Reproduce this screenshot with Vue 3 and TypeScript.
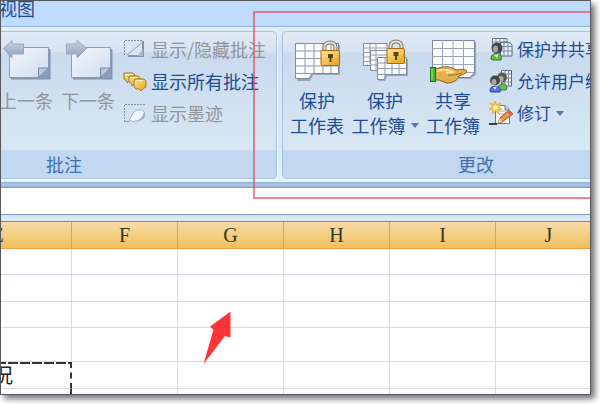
<script setup lang="ts">
interface Column {
  name: string
  kind: 'wide' | 'normal'
}

const columns: Column[] = [
  { name: 'E', kind: 'wide' },
  { name: 'F', kind: 'normal' },
  { name: 'G', kind: 'normal' },
  { name: 'H', kind: 'normal' },
  { name: 'I', kind: 'normal' },
  { name: 'J', kind: 'normal' },
]

const rows: { size: string; first: string; mark: string }[] = [
  { size: 'short', first: '', mark: '' },
  { size: 'mid', first: '', mark: '' },
  { size: 'short', first: '', mark: '' },
  { size: 'tall', first: '', mark: '' },
  { size: 'mid', first: '况', mark: 'copied-top copied-right' },
  { size: 'cut', first: '', mark: 'copied-right' },
]
</script>

<template>
  <div class="frame">
    <nav class="tabs"><a href="#" class="tab">视图</a></nav>

    <div class="ribbon">
      <section class="group comments">
        <div class="body">
          <button class="large" disabled>
            <svg viewBox="0 0 50 50" class="big">
              <defs>
                <linearGradient id="card" x1="0" y1="0" x2="1" y2="1">
                  <stop offset="0" stop-color="#f4f7fc" />
                  <stop offset="1" stop-color="#cfdbef" />
                </linearGradient>
                <linearGradient id="steel" x1="0" y1="0" x2="0" y2="1">
                  <stop offset="0" stop-color="#cbd6e6" />
                  <stop offset="1" stop-color="#8d9db8" />
                </linearGradient>
                <linearGradient id="gold" x1="0" y1="0" x2="1" y2="1">
                  <stop offset="0" stop-color="#ffe48a" />
                  <stop offset="1" stop-color="#e5a01c" />
                </linearGradient>
              </defs>
              <path d="M10 13H49.500V43.500H10Z" fill="#8392ae" />
              <path d="M8.500 11.500H47.500V41.500H8.500Z" fill="url(#card)" stroke="#8e9cb8" />
              <path d="M37.500 41.500V32H47.500Z" fill="#b9c8df" stroke="#7788a6" />
              <path d="M47 32L38 41.500H47.500Z" fill="#8c9bb7" />
              <path d="M2.500 12.500L11 4.500V8H22.500V18H11V22Z" fill="url(#steel)" stroke="#98a6be" />
            </svg>
            <span>上一条</span>
          </button>
          <button class="large" disabled>
            <svg viewBox="0 0 50 50" class="big">
              <path d="M10 13H49.500V43.500H10Z" fill="#8392ae" />
              <path d="M8.500 11.500H47.500V41.500H8.500Z" fill="url(#card)" stroke="#8e9cb8" />
              <path d="M37.500 41.500V32H47.500Z" fill="#b9c8df" stroke="#7788a6" />
              <path d="M47 32L38 41.500H47.500Z" fill="#8c9bb7" />
              <path d="M23.500 12.500L14 4.500V8H3.500V18H14V22Z" fill="url(#steel)" stroke="#98a6be" />
            </svg>
            <span>下一条</span>
          </button>
          <div class="stack">
            <button class="small" disabled>
              <svg viewBox="0 0 24 24" class="little">
                <path d="M2 5H21V20H5Z" fill="#dbe5f3" />
                <path d="M20 4V19H5" fill="none" stroke="#8493ae" stroke-width="2" />
                <path d="M4 18L20 5" stroke="#93a1b8" />
                <path d="M14 19L20 12V19Z" fill="#a9b8d0" />
                <path d="M1.500 18V3.500H20" fill="none" stroke="#8491a8" stroke-dasharray="2 1" />
              </svg>
              <span>显示/隐藏批注</span>
            </button>
            <button class="small">
              <svg viewBox="0 0 24 24" class="little">
                <g fill="url(#gold)" stroke="#9b7b21">
                  <path d="M1 4H10L12 6V12H6L4 14V12L1 10Z" />
                  <path d="M6 7H15L17 9V15H11L9 17V15L6 13Z" />
                  <path d="M12 10H21L23 12V18L21 19L18 22L16 20H13L11 17V12Z" />
                </g>
                <path d="M2 5.500H10M7 8.500H15M13 11.500H20" stroke="#fff7bd" />
              </svg>
              <span>显示所有批注</span>
            </button>
            <button class="small" disabled>
              <svg viewBox="0 0 24 24" class="little">
                <path d="M1.500 21V3.500H22" fill="none" stroke="#8491a8" stroke-dasharray="2 1" />
                <path d="M2 20.500H6" stroke="#8491a8" />
                <path d="M6 19C8 17 9 10 15 9C20 8 23 11 21 15C19 20 12 22 6 19Z" fill="#f1f5fb" stroke="#a9b6ca" />
                <path d="M11 20C18 19 20 15 21 11C24 15 20 21 11 20Z" fill="#a0adc3" />
              </svg>
              <span>显示墨迹</span>
            </button>
          </div>
        </div>
        <h2 class="caption">批注</h2>
      </section>

      <section class="group changes">
        <div class="body">
          <button class="large">
            <svg viewBox="0 0 50 50" class="big">
              <path d="M5 9H48V39H21L18 45H5Z" fill="#9aa7bb" />
              <path d="M3.500 7.500H46.500V37.500H20L17 42.500H3.500Z" fill="#fbfcfe" stroke="#7c889d" />
              <path d="M13 7V37M22 7V37M31 7V37M39 7V37M3 15H46M3 22.500H46M3 30H46M3 37.500H20" stroke="#8e99ac" />
              <path d="M32.500 15V11C32.500 5 43.500 5 43.500 11V15" fill="none" stroke="#7e755f" stroke-width="4" />
              <path d="M32.500 15V11C32.500 5 43.500 5 43.500 11V15" fill="none" stroke="#e4dfce" stroke-width="2" />
              <rect x="29" y="14.500" width="18.500" height="15" rx="1" fill="url(#gold)" stroke="#a66a10" />
              <path d="M31 17H46M31 20H46" stroke="#fff0a6" opacity=".6" />
              <path d="M36 18H41V22H39.500V26H37.500V22H36Z" fill="#5b4517" />
            </svg>
            <span>保护</span>
            <span>工作表</span>
          </button>
          <button class="large">
            <svg viewBox="0 0 50 50" class="big">
              <path d="M3.500 7.500H27V26H14L12 29.500H3.500Z" fill="#fbfcfe" stroke="#7c889d" />
              <path d="M10 8V28M16 8V26M3 12H26M3 16.500H26M3 21H26M3 25.500H14" stroke="#929db0" />
              <path d="M10.500 14.500H36V31H21L19 34.500H10.500Z" fill="#fbfcfe" stroke="#7c889d" />
              <path d="M16 14V34M10 19H34M10 24H34M10 29H20" stroke="#929db0" />
              <path d="M19 23H48V40H27L25 45H19Z" fill="#9aa7bb" />
              <path d="M17.500 21.500H46.500V38.500H26L24 43.500H17.500Z" fill="#fbfcfe" stroke="#7c889d" />
              <path d="M25 21V40M32 21V38M39 21V38M17 27H46M17 32.500H46M17 38.500H26" stroke="#8e99ac" />
              <path d="M30.500 13V10C30.500 4 41.500 4 41.500 10V13" fill="none" stroke="#7e755f" stroke-width="4" />
              <path d="M30.500 13V10C30.500 4 41.500 4 41.500 10V13" fill="none" stroke="#e4dfce" stroke-width="2" />
              <rect x="27" y="12.500" width="17.500" height="15" rx="1" fill="url(#gold)" stroke="#a66a10" />
              <path d="M29 15H43M29 18H43" stroke="#fff0a6" opacity=".6" />
              <path d="M33.500 16H38.500V20H37V24H35V20H33.500Z" fill="#5b4517" />
            </svg>
            <span>保护</span>
            <span class="with-arrow">工作簿<i class="arrow"></i></span>
          </button>
          <button class="large">
            <svg viewBox="0 0 50 50" class="big">
              <path d="M6 6H48V38L43 43H28V38H6Z" fill="#9aa7bb" />
              <path d="M4.500 4.500H46.500V36.500L42 41.500H30V36.500H4.500Z" fill="#fbfcfe" stroke="#7c889d" />
              <path d="M14.500 4V36M25 4V36M35.500 4V36M4 12.500H46M4 20.500H46M4 28.500H46M30 36.500H46" stroke="#9aa5b8" />
              <path d="M7 33L14 31C20 30 26 32 28 34C33 33 38 33 39 35C38 38 33 39 31 40C30 44 25 47 19 47L11 44H7Z" fill="#e4b04e" stroke="#8a5c17" />
              <path d="M9 35C15 33 21 34 26 36L18 37" fill="none" stroke="#ffe09a" stroke-width="2" />
              <path d="M20 39C26 40 29 38 34 37" fill="none" stroke="#9b681b" />
              <rect x="2.500" y="31.500" width="5" height="14" fill="#3fbb35" stroke="#177719" />
              <path d="M4 33V44" stroke="#a1ec88" />
            </svg>
            <span>共享</span>
            <span>工作簿</span>
          </button>
          <div class="stack">
            <button class="small">
              <svg viewBox="0 0 24 24" class="little">
                <path d="M3.500 1.500H18V14H3.500Z" fill="#f4f6fa" stroke="#5f6a7e" />
                <path d="M7 1V10M11 1V10M15 1V10M3 5H18M3 9H18" stroke="#79869d" />
                <path d="M11.500 5.500H21L23 8V19H11.500Z" fill="#eaf0f9" stroke="#546582" />
                <path d="M15 5V19M19 5V19M11 9.500H23M11 14H23" stroke="#768bad" />
                <circle cx="8" cy="11" r="5.500" fill="#454743" />
                <ellipse cx="6.500" cy="12" rx="2.500" ry="3.500" fill="#a9a69b" />
                <path d="M2 22C2 17 6 16 9 17C12 17 13 20 12 23H4Z" fill="#62b94c" stroke="#2f7428" />
                <path d="M5 18L8 21L10 17" fill="#d3f1bc" />
              </svg>
              <span>保护并共享</span>
            </button>
            <button class="small">
              <svg viewBox="0 0 24 24" class="little">
                <path d="M12.500 1.500H22.500V17H12.500Z" fill="#f4f6fa" stroke="#5f6a7e" />
                <path d="M16 1V17M19.500 1V17M12 5H22M12 9H22M12 13H22" stroke="#79869d" />
                <circle cx="13" cy="8.500" r="5" fill="#565953" />
                <ellipse cx="12" cy="10" rx="2.500" ry="3" fill="#b2b0a6" />
                <path d="M9 20C9 14 17 13 18 18L17 21H10Z" fill="#6fbd52" stroke="#347b2b" />
                <circle cx="6" cy="11.500" r="5" fill="#454743" />
                <ellipse cx="5" cy="13" rx="2.500" ry="3" fill="#aaa89e" />
                <path d="M1 22C1 17 5 17 7 18C11 17 12 21 11 23H2Z" fill="#5075e2" stroke="#263da0" />
                <path d="M4 18L6 21L8 18" fill="#dce5ff" />
              </svg>
              <span>允许用户编</span>
            </button>
            <button class="small">
              <svg viewBox="0 0 24 24" class="little">
                <path d="M6.500 4.500H16L20.500 9V22.500H6.500Z" fill="#fafbfe" stroke="#66738b" />
                <path d="M16 5V9H20" fill="#c9d4e5" stroke="#66738b" />
                <path d="M10 10H17M10 13H17" stroke="#a2b0c6" />
                <path d="M0 23H8" stroke="#34404f" stroke-width="2" />
                <path d="M20 9L24 13L13 21L9 22L11 17Z" fill="#eb9a43" stroke="#97521a" />
                <path d="M9 22L11 17L13 21Z" fill="#f6dcba" />
                <path d="M20 9L24 13L22 15L18 11Z" fill="#df6656" />
                <path d="M6 0L7.500 4L12 2L9.500 6L13 8L9 9L10 13L6.500 10L3 13L4 9L0 8L3.500 6L1 2L5 4Z" fill="#ffd24a" stroke="#e9ac27" />
                <circle cx="6.500" cy="6.500" r="2" fill="#fff8c8" />
              </svg>
              <span class="with-arrow">修订<i class="arrow"></i></span>
            </button>
          </div>
        </div>
        <h2 class="caption">更改</h2>
      </section>
    </div>

    <div class="band"></div>
    <div class="formula"></div>
    <div class="divider"></div>

    <div class="sheet">
      <table>
        <colgroup>
          <col v-for="c in columns" :key="c.name" :class="c.kind" />
        </colgroup>
        <thead>
          <tr>
            <th v-for="c in columns" :key="c.name" scope="col">{{ c.name }}</th>
          </tr>
        </thead>
        <tbody>
          <tr v-for="(row, r) in rows" :key="r" :class="row.size">
            <td v-for="(c, i) in columns" :key="c.name" :class="i === 0 ? row.mark : ''">{{ i === 0 ? row.first : '' }}</td>
          </tr>
        </tbody>
      </table>
    </div>

    <div class="highlight"></div>
    <svg class="pointer" viewBox="0 0 28 54">
      <path d="M27.500 0.500V26.500L22 25L0.500 53L10.500 18.500L7 15.500Z" fill="#fb3537" />
    </svg>
  </div>
</template>

<style>
body {
  background: #fff;
}
</style>

<style scoped>
.frame {
  position: relative;
  margin: 0 9px 9px 0;
  overflow: hidden;
  border: 1px solid #56585e;
  background: #fff;
  box-shadow: 4px 4px 6px #777;
  font-family: "Noto Sans CJK SC", sans-serif;
  font-size: 18px;
  color: #1e4c94;
}

.tabs {
  box-sizing: border-box;
  height: 26px;
  border-bottom: 1px solid #8fb4e2;
  background: #bfdbff;
}

.tab {
  display: block;
  margin-left: -2px;
  line-height: 14px;
  color: #1e4c94;
  text-decoration: none;
}

.ribbon {
  display: flex;
  gap: 5px;
  padding: 4px 0 3px;
  background: linear-gradient(#e2edf8, #d3e4f6 20px, #dceaf6 80%, #dcf6ff);
}

.group {
  flex: none;
  box-sizing: border-box;
  overflow: hidden;
  border: 1px solid #a9c3de;
  border-radius: 4px;
  background: linear-gradient(#e0eaf5, #d7e3f2 20px, #c9daee 21px, #d8e7f3 118px);
  box-shadow: 1px 1px 0 #eef8ff;
}

.comments {
  width: 426px;
  margin-left: -150px;
}

.comments .body {
  padding-left: 143px;
}

.changes {
  width: 388px;
}

.body {
  display: flex;
  height: 118px;
}

.caption {
  margin: 0;
  background: #c1d8f0;
  font-size: 18px;
  font-weight: 400;
  line-height: 28px;
  text-align: center;
  color: #416fae;
}

button {
  padding: 0;
  border: 0;
  background: none;
  font: inherit;
  color: inherit;
  white-space: nowrap;
}

button:disabled {
  color: #929498;
}

.large {
  display: flex;
  flex-direction: column;
  align-items: center;
  width: 62px;
  padding-top: 4px;
  line-height: 25px;
}

.changes .large {
  width: 68px;
}

.big {
  width: 50px;
  height: 50px;
  margin-bottom: 2px;
}

.stack {
  display: flex;
  flex-direction: column;
  padding: 1px 0 0 4px;
}

.changes .stack {
  padding-left: 2px;
}

.small {
  display: flex;
  align-items: center;
  gap: 4px;
  height: 32px;
  line-height: 32px;
}

.changes .small {
  font-size: 17px;
}

.little {
  flex: none;
  width: 24px;
  height: 24px;
}

.with-arrow {
  display: flex;
  align-items: center;
  gap: 5px;
}

.arrow {
  border: 4px solid transparent;
  border-top: 5px solid #5878a8;
  border-bottom: 0;
}

.band {
  height: 6px;
  background: linear-gradient(#8fafd0, #a9c2df 2px, #a9c2df 4px, #7695ba);
}

.formula {
  height: 26px;
}

.divider {
  height: 6px;
  border-top: 1px solid #7f9bba;
  border-bottom: 1px solid #6d8aab;
  background: linear-gradient(#d4e3f3, #dfeaf6);
}

table {
  width: 678px;
  margin-left: -77px;
  table-layout: fixed;
  border-spacing: 0;
}

.wide {
  width: 148px;
}

.normal {
  width: 106px;
}

th,
td {
  box-sizing: border-box;
  padding: 0;
  border-right: 1px solid #d5dae6;
  border-bottom: 1px solid #d5dae6;
}

th {
  height: 27px;
  border-color: #f09a3e;
  background: linear-gradient(#f8dba7, #f0c05c);
  font-family: "Liberation Serif", serif;
  font-size: 20px;
  font-weight: 400;
  line-height: 26px;
  color: #2c3a28;
}

td {
  font-size: 20px;
  line-height: 20px;
  color: #222;
}

td:first-child {
  padding-right: 57px;
  text-align: right;
}

.short td {
  height: 26px;
}

.mid td {
  height: 27px;
}

.tall td {
  height: 34px;
}

.cut td {
  height: 5px;
  border-bottom: 0;
}

.copied-right {
  border-right: 2px dashed #333;
}

td.copied-top {
  background: repeating-linear-gradient(90deg, #333 0 10px, transparent 10px 12px) top / 100% 2px no-repeat;
}

.highlight {
  position: absolute;
  top: 10px;
  right: -10px;
  left: 252px;
  height: 184px;
  border: 2px solid rgba(228, 70, 80, 0.65);
}

.pointer {
  position: absolute;
  top: 310px;
  left: 202px;
  width: 28px;
  height: 54px;
}
</style>
